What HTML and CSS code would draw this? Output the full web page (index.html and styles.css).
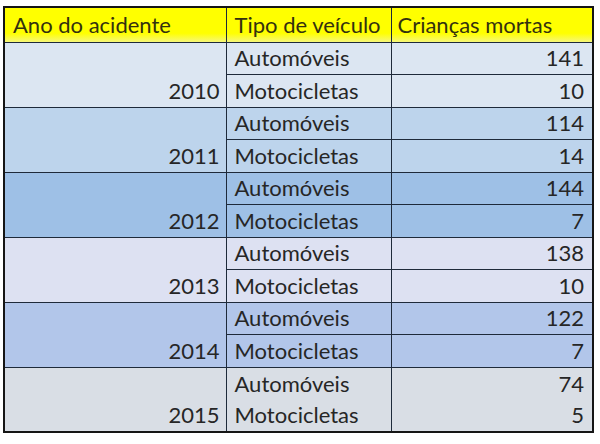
FILE: index.html
```html
<!DOCTYPE html>
<html lang="pt">
<head>
<meta charset="utf-8">
<link rel="stylesheet" href="styles.css">
</head>
<body>
<div class="wrap">
<table class="data">
  <colgroup><col class="c1"><col class="c2"><col class="c3"></colgroup>
  <thead>
    <tr class="head"><th>Ano do acidente</th><th>Tipo de veículo</th><th class="h3">Crianças mortas</th></tr>
  </thead>
  <tbody class="g g2010">
    <tr><td class="year" rowspan="2">2010</td><td>Automóveis</td><td class="num">141</td></tr>
    <tr><td>Motocicletas</td><td class="num">10</td></tr>
  </tbody>
  <tbody class="g g2011">
    <tr><td class="year" rowspan="2">2011</td><td>Automóveis</td><td class="num">114</td></tr>
    <tr><td>Motocicletas</td><td class="num">14</td></tr>
  </tbody>
  <tbody class="g g2012">
    <tr><td class="year" rowspan="2">2012</td><td>Automóveis</td><td class="num">144</td></tr>
    <tr><td>Motocicletas</td><td class="num">7</td></tr>
  </tbody>
  <tbody class="g g2013">
    <tr><td class="year" rowspan="2">2013</td><td>Automóveis</td><td class="num">138</td></tr>
    <tr><td>Motocicletas</td><td class="num">10</td></tr>
  </tbody>
  <tbody class="g g2014">
    <tr><td class="year" rowspan="2">2014</td><td>Automóveis</td><td class="num">122</td></tr>
    <tr><td>Motocicletas</td><td class="num">7</td></tr>
  </tbody>
  <tbody class="g g2015 noinner">
    <tr><td class="year" rowspan="2">2015</td><td>Automóveis</td><td class="num">74</td></tr>
    <tr><td>Motocicletas</td><td class="num">5</td></tr>
  </tbody>
</table>
</div>
</body>
</html>
```

FILE: styles.css
```css
html, body {
  margin: 0;
  padding: 0;
  background: #ffffff;
}

.wrap {
  padding: 6px 0 0 3px;
}

.data {
  width: 589px;
  border-collapse: collapse;
  table-layout: fixed;
  border: 2px solid #151515;
  font-family: Lato, "Liberation Sans", sans-serif;
  font-size: 22px;
  color: #262626;
}

.c1 { width: 222px; }
.c2 { width: 165px; }
.c3 { width: 202px; }

.data th,
.data td {
  padding: 0 8px 0 8px;
  border-left: 1px solid #1e2a3a;
  border-top: 1px solid #1e2a3a;
  vertical-align: middle;
  line-height: 24px;
  white-space: nowrap;
}

.head {
  height: 35px;
  background: linear-gradient(#ffff00 0%, #ffff00 75%, #f6f77a 100%);
}

.head th {
  text-align: left;
  font-weight: normal;
  color: #33310f;
  border-top: 2px solid #151515;
}

.head th.h3 {
  padding-left: 6px;
}

.g tr {
  height: 32.5px;
}

.g td {
  text-align: left;
}

.data td.year {
  text-align: right;
  vertical-align: bottom;
  padding-bottom: 4px;
  padding-right: 6px;
}

.data td.num {
  text-align: right;
  padding-right: 8px;
}

.noinner tr + tr td {
  border-top: none;
}

.g2010 { background: #dce6f2; }
.g2011 { background: #bdd4ec; }
.g2012 { background: #9ec0e6; }
.g2013 { background: #dde1f2; }
.g2014 { background: #b2c6ea; }
.g2015 { background: #d9dee5; }
```
